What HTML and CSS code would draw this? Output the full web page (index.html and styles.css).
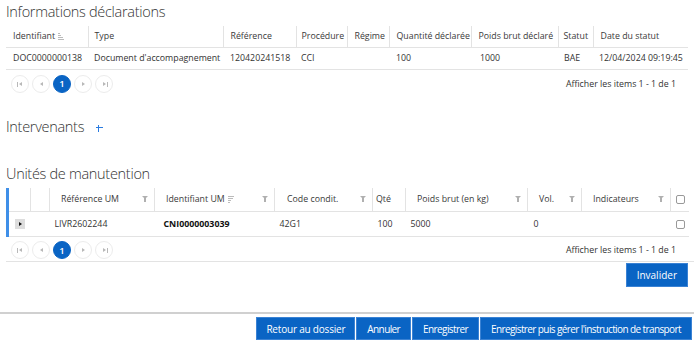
FILE: index.html
```html
<!DOCTYPE html>
<html lang="fr">
<head>
    <meta charset="UTF-8">
    <title>Déclaration</title>
    <link rel="stylesheet" href="styles.css">
</head>
<body>
<div class="page">

    <section class="block">
        <h2 class="block-title">Informations déclarations</h2>
        <table class="grid decl">
            <thead>
                <tr>
                    <th class="c-id">Identifiant <span class="sort-ico"></span></th>
                    <th class="c-type">Type</th>
                    <th class="c-ref">Référence</th>
                    <th class="c-proc">Procédure</th>
                    <th class="c-reg">Régime</th>
                    <th class="c-qte">Quantité déclarée</th>
                    <th class="c-poids">Poids brut déclaré</th>
                    <th class="c-stat">Statut</th>
                    <th class="c-date">Date du statut</th>
                </tr>
            </thead>
            <tbody>
                <tr>
                    <td>DOC0000000138</td>
                    <td>Document d'accompagnement</td>
                    <td>120420241518</td>
                    <td>CCI</td>
                    <td></td>
                    <td>100</td>
                    <td>1000</td>
                    <td>BAE</td>
                    <td>12/04/2024 09:19:45</td>
                </tr>
            </tbody>
        </table>
        <div class="pager">
            <div class="pager-nav">
                <span class="pg-btn"><span class="ico first"></span></span>
                <span class="pg-btn"><span class="ico prev"></span></span>
                <span class="pg-btn active">1</span>
                <span class="pg-btn"><span class="ico next"></span></span>
                <span class="pg-btn"><span class="ico last"></span></span>
            </div>
            <span class="pager-info">Afficher les items 1 - 1 de 1</span>
        </div>
    </section>

    <section class="block intervenants">
        <h2 class="block-title">Intervenants <span class="add"></span></h2>
    </section>

    <section class="block um">
        <h2 class="block-title">Unités de manutention</h2>
        <table class="grid um-table">
            <thead>
                <tr>
                    <th class="c-exp"></th>
                    <th class="c-x"></th>
                    <th class="c-rum">Référence UM <span class="filter"></span></th>
                    <th class="c-ium">Identifiant UM <span class="sort-ico desc"></span> <span class="filter"></span></th>
                    <th class="c-code">Code condit. <span class="filter"></span></th>
                    <th class="c-qty">Qté</th>
                    <th class="c-pb">Poids brut (en kg) <span class="filter"></span></th>
                    <th class="c-vol">Vol. <span class="filter"></span></th>
                    <th class="c-ind">Indicateurs <span class="filter"></span></th>
                    <th class="c-chk"><span class="chk"></span></th>
                </tr>
            </thead>
            <tbody>
                <tr>
                    <td class="c-exp"><span class="expand"></span></td>
                    <td></td>
                    <td>LIVR2602244</td>
                    <td class="strong">CNI0000003039</td>
                    <td>42G1</td>
                    <td>100</td>
                    <td>5000</td>
                    <td>0</td>
                    <td></td>
                    <td class="c-chk"><span class="chk"></span></td>
                </tr>
            </tbody>
        </table>
        <div class="pager pager-um">
            <div class="pager-nav">
                <span class="pg-btn"><span class="ico first"></span></span>
                <span class="pg-btn"><span class="ico prev"></span></span>
                <span class="pg-btn active">1</span>
                <span class="pg-btn"><span class="ico next"></span></span>
                <span class="pg-btn"><span class="ico last"></span></span>
            </div>
            <span class="pager-info">Afficher les items 1 - 1 de 1</span>
        </div>
        <div class="row-actions">
            <button class="btn">Invalider</button>
        </div>
    </section>

    <div class="footer">
        <button class="btn back">Retour au dossier</button>
        <button class="btn tight">Annuler</button>
        <button class="btn tight">Enregistrer</button>
        <button class="btn tight">Enregistrer puis gérer l'instruction de transport</button>
    </div>

</div>
</body>
</html>
```

FILE: styles.css
```css
body {
    margin: 0;
    font-family: 'Open Sans', 'Noto Sans', sans-serif;
    font-size: 8.8px;
    color: #333;
    background-color: #fff;
}

.page {
    width: 694px;
}

.block {
    padding: 0 6px 0 6px;
}

.block-title {
    margin: 0;
    height: 26px;
    line-height: 24px;
    font-size: 14.5px;
    font-weight: 300;
    letter-spacing: -0.3px;
    color: #333;
}

/* tables */
.grid {
    border-collapse: collapse;
    table-layout: fixed;
    width: 682px;
}

.grid th {
    box-sizing: border-box;
    font-weight: normal;
    text-align: left;
    color: #3a3a3a;
    height: 21px;
    padding: 0 7px;
    border-left: 1px solid #e3e3e3;
    border-bottom: 1px solid #e3e3e3;
    white-space: nowrap;
    position: relative;
}

.grid th:first-child {
    border-left: none;
}

.grid td {
    height: 21px;
    padding: 0 7px;
    border-bottom: 1px solid #e3e3e3;
    white-space: nowrap;
    overflow: hidden;
}

.decl .c-id { width: 82px; }
.decl .c-type { width: 135px; padding-left: 6px; }
.decl .c-ref { width: 73px; }
.decl .c-proc { width: 51px; padding-left: 5px; }
.decl .c-reg { width: 42px; }
.decl .c-qte { width: 82px; }
.decl .c-poids { width: 87px; }
.decl .c-stat { width: 35px; padding-left: 5px; }
.decl .c-date { width: 95px; }

.decl td:nth-child(2) { padding-left: 6px; }
.decl td:nth-child(4) { padding-left: 5px; }
.decl td:nth-child(7) { padding-left: 9px; }
.decl td:nth-child(8) { padding-left: 6px; }
.decl td:nth-child(9) { padding-left: 6px; }

.sort-ico {
    display: inline-block;
    width: 6px;
    height: 7px;
    margin-left: 1px;
    vertical-align: -1px;
    background: linear-gradient(#bbb, #bbb) 0 0 / 2px 1px no-repeat,
                linear-gradient(#bbb, #bbb) 0 2px / 3px 1px no-repeat,
                linear-gradient(#bbb, #bbb) 0 4px / 5px 1px no-repeat,
                linear-gradient(#bbb, #bbb) 0 6px / 6px 1px no-repeat;
}

.sort-ico.desc {
    background: linear-gradient(#bbb, #bbb) 0 0 / 6px 1px no-repeat,
                linear-gradient(#bbb, #bbb) 0 2px / 5px 1px no-repeat,
                linear-gradient(#bbb, #bbb) 0 4px / 3px 1px no-repeat,
                linear-gradient(#bbb, #bbb) 0 6px / 2px 1px no-repeat;
}

/* pager */
.pager {
    display: flex;
    align-items: center;
    justify-content: space-between;
    height: 24px;
    padding: 2px 0 0 0;
}

.pager-nav {
    display: flex;
    gap: 3px;
    padding-left: 5px;
}

.pg-btn {
    width: 18px;
    height: 18px;
    border-radius: 50%;
    border: 1px solid #ececec;
    box-sizing: border-box;
    display: flex;
    align-items: center;
    justify-content: center;
}

.pg-btn.active {
    background-color: #0a64c4;
    border-color: #0a64c4;
    color: #fff;
    font-size: 9.5px;
    font-weight: 600;
}

.ico {
    display: block;
    width: 0;
    height: 0;
    border-top: 2px solid transparent;
    border-bottom: 2px solid transparent;
}

.ico.prev,
.ico.first {
    border-right: 3px solid #b8b8b8;
}

.ico.next,
.ico.last {
    border-left: 3px solid #b8b8b8;
}

.ico.first::before,
.ico.last::after {
    content: "";
    display: block;
    width: 1px;
    height: 5px;
    background: #b8b8b8;
    margin-top: -2px;
}

.ico.first::before {
    margin-left: -2px;
}

.ico.last::after {
    margin-left: 1px;
}

.pager-info {
    padding-right: 12px;
}

.intervenants {
    margin-top: 19px;
}

.add {
    display: inline-block;
    width: 7px;
    height: 7px;
    margin-left: 8px;
    vertical-align: 0;
    background: linear-gradient(#2a7be0, #2a7be0) center / 7px 1.4px no-repeat,
                linear-gradient(#2a7be0, #2a7be0) center / 1.4px 7px no-repeat;
}

.um {
    margin-top: 21px;
}

/* handling units */
.um-table {
    border-left: 3px solid #3f8fe8;
}

.um-table th {
    height: 24px;
    padding-left: 11px;
}

.um-table td {
    height: 24px;
    padding-left: 5px;
}

.um-table .c-exp { width: 23px; padding: 0 0 0 6px; }
.um-table .c-x { width: 17px; }
.um-table .c-rum { width: 105px; }
.um-table .c-ium { width: 120px; }
.um-table .c-code { width: 98px; padding-left: 12px; }
.um-table .c-qty { width: 33px; padding-left: 3px; }
.um-table .c-pb { width: 122px; }
.um-table .c-vol { width: 54px; }
.um-table .c-ind { width: 89px; }
.um-table .c-chk { width: 18px; padding: 0 0 0 5px; }

.um-table td:nth-child(4) { padding-left: 9px; }
.um-table td:nth-child(8) { padding-left: 6px; }

.strong {
    font-weight: 700;
    color: #111;
}

.filter {
    position: absolute;
    right: 6px;
    top: 8px;
    width: 0;
    height: 0;
    border-left: 3.5px solid transparent;
    border-right: 3.5px solid transparent;
    border-top: 3px solid #b0b0b0;
}

.filter::after {
    content: "";
    position: absolute;
    left: -1px;
    top: -1px;
    width: 2px;
    height: 4px;
    background: #b0b0b0;
}

.chk {
    display: block;
    width: 7px;
    height: 7px;
    border: 1px solid #999;
    border-radius: 2px;
}

.expand {
    display: block;
    width: 10px;
    height: 10px;
    background: #ddd;
    position: relative;
}

.expand::after {
    content: "";
    position: absolute;
    left: 4px;
    top: 3px;
    border-top: 2px solid transparent;
    border-bottom: 2px solid transparent;
    border-left: 3px solid #111;
}

.pager-um {
    border-bottom: 1px solid #e3e3e3;
    margin-right: -6px;
    padding-right: 6px;
    height: 22px;
}

.row-actions {
    display: flex;
    justify-content: flex-end;
    padding-top: 1px;
}

.btn {
    font-family: inherit;
    font-size: 10px;
    color: #fff;
    background-color: #0a64c4;
    border: 1px solid #3a82d4;
    height: 24px;
    padding: 0 10px;
    cursor: pointer;
}

.btn.back {
    letter-spacing: -0.2px;
    padding: 0 9px;
}

.btn.tight {
    letter-spacing: -0.6px;
}

.footer {
    margin-top: 25px;
    border-top: 2px solid #d0d0d0;
    padding: 3px 2px 0 0;
    display: flex;
    justify-content: flex-end;
    gap: 1px;
}

.footer .btn {
    height: 23px;
}
```
